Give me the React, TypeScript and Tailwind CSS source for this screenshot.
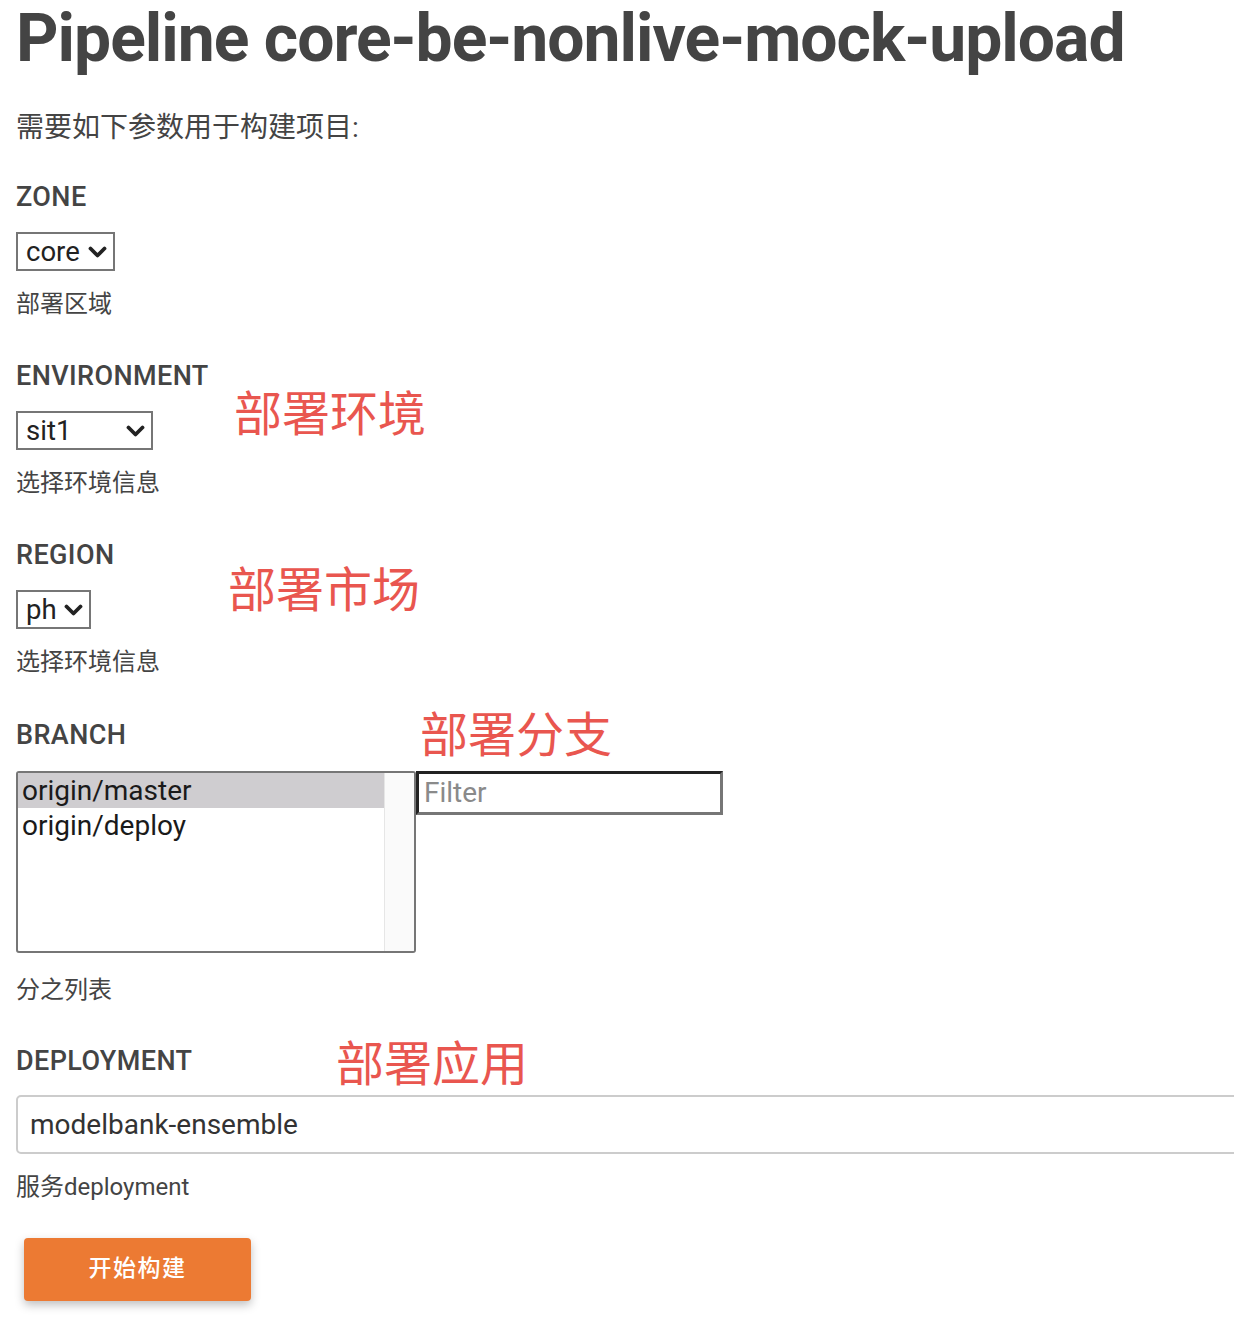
import React from 'react';

const font = { fontFamily: 'Roboto, "Noto Sans CJK SC", sans-serif' };

const Chevron = () => (
  <svg width="19" height="14" viewBox="0 0 19 14" className="shrink-0">
    <path d="M2.5 3.5 L9.5 10.5 L16.5 3.5" fill="none" stroke="#222" strokeWidth="3.8" strokeLinecap="round" strokeLinejoin="round" />
  </svg>
);

interface FakeSelectProps {
  value: string;
  width: string;
}

const FakeSelect = ({ value, width }: FakeSelectProps) => (
  <div className={`flex h-[39px] items-center justify-between border-2 border-[#767676] bg-white pl-[8px] pr-[6px] ${width}`}>
    <span className="text-[27.5px] leading-none text-[#222]">{value}</span>
    <Chevron />
  </div>
);

const Label = ({ children }: { children: React.ReactNode }) => (
  <div className="text-[27px] font-medium leading-[30px] tracking-[0.4px] text-[#444]">{children}</div>
);

const Desc = ({ children, className = 'mt-[19px]' }: { children: React.ReactNode; className?: string }) => (
  <div className={`text-[24px] leading-[28px] text-[#444] ${className}`}>{children}</div>
);

const Note = ({ children, className }: { children: React.ReactNode; className: string }) => (
  <div className={`absolute text-[48px] leading-none text-[#e9564f] ${className}`} style={{ fontFamily: '"Noto Sans CJK SC", sans-serif' }}>
    {children}
  </div>
);

export default function App() {
  return (
    <div className="min-h-[1344px] w-[1234px] overflow-hidden bg-white px-4" style={font}>
      <h1 className="whitespace-nowrap pt-[4px] text-[66px] font-bold leading-[70px] tracking-[-1px] text-[#444]">
        Pipeline core-be-nonlive-mock-upload
      </h1>
      <p className="mt-[36px] text-[28px] leading-[36px] text-[#444]">需要如下参数用于构建项目:</p>

      <div className="mt-[36px] flex flex-col">
        {/* ZONE */}
        <section className="relative mb-[43px]">
          <Label>ZONE</Label>
          <div className="mt-[20px]">
            <FakeSelect value="core" width="w-[99px]" />
          </div>
          <Desc>部署区域</Desc>
        </section>

        {/* ENVIRONMENT */}
        <section className="relative mb-[43px]">
          <Label>ENVIRONMENT</Label>
          <Note className="left-[218px] top-[25px]">部署环境</Note>
          <div className="mt-[20px]">
            <FakeSelect value="sit1" width="w-[137px]" />
          </div>
          <Desc>选择环境信息</Desc>
        </section>

        {/* REGION */}
        <section className="relative mb-[44px]">
          <Label>REGION</Label>
          <Note className="left-[212px] top-[22px]">部署市场</Note>
          <div className="mt-[20px]">
            <FakeSelect value="ph" width="w-[75px]" />
          </div>
          <Desc>选择环境信息</Desc>
        </section>

        {/* BRANCH */}
        <section className="relative mb-[42px]">
          <Label>BRANCH</Label>
          <Note className="left-[404px] top-[-13px]">部署分支</Note>
          <div className="mt-[21px] flex items-start">
            <div className="flex h-[182px] w-[400px] overflow-hidden rounded-[3px] border-2 border-[#767676] bg-white">
              <div className="flex-1 text-[28px] leading-[35px] text-[#1a1a1a]">
                <div className="bg-[#cfcdd0] pl-[4px]">origin/master</div>
                <div className="pl-[4px]">origin/deploy</div>
              </div>
              <div className="w-[30px] border-l border-[#e6e6e6] bg-[#fafafa]" />
            </div>
            <div className="flex h-[44px] w-[307px] items-center border-[3px] border-t-[#222] border-l-[#222] border-b-[#767676] border-r-[#767676] bg-white pl-[5px] text-[28px] text-[#8a8a8a]">
              Filter
            </div>
          </div>
          <Desc className="mt-[23px]">分之列表</Desc>
        </section>

        {/* DEPLOYMENT */}
        <section className="relative">
          <Label>DEPLOYMENT</Label>
          <Note className="left-[320px] top-[-10px]">部署应用</Note>
          <div className="mt-[19px] flex h-[59px] w-[1240px] items-center rounded-[5px] border-2 border-[#cccccc] bg-white pl-[12px] text-[28px] text-[#333]">
            modelbank-ensemble
          </div>
          <Desc>服务deployment</Desc>
        </section>
      </div>

      <button className="ml-[8px] mt-[37px] flex h-[63px] w-[227px] items-center justify-center rounded-[4px] bg-[#ec7a33] text-[23px] font-medium tracking-[1.5px] text-white shadow-[0_4px_10px_rgba(0,0,0,0.25)]">
        开始构建
      </button>
    </div>
  );
}
